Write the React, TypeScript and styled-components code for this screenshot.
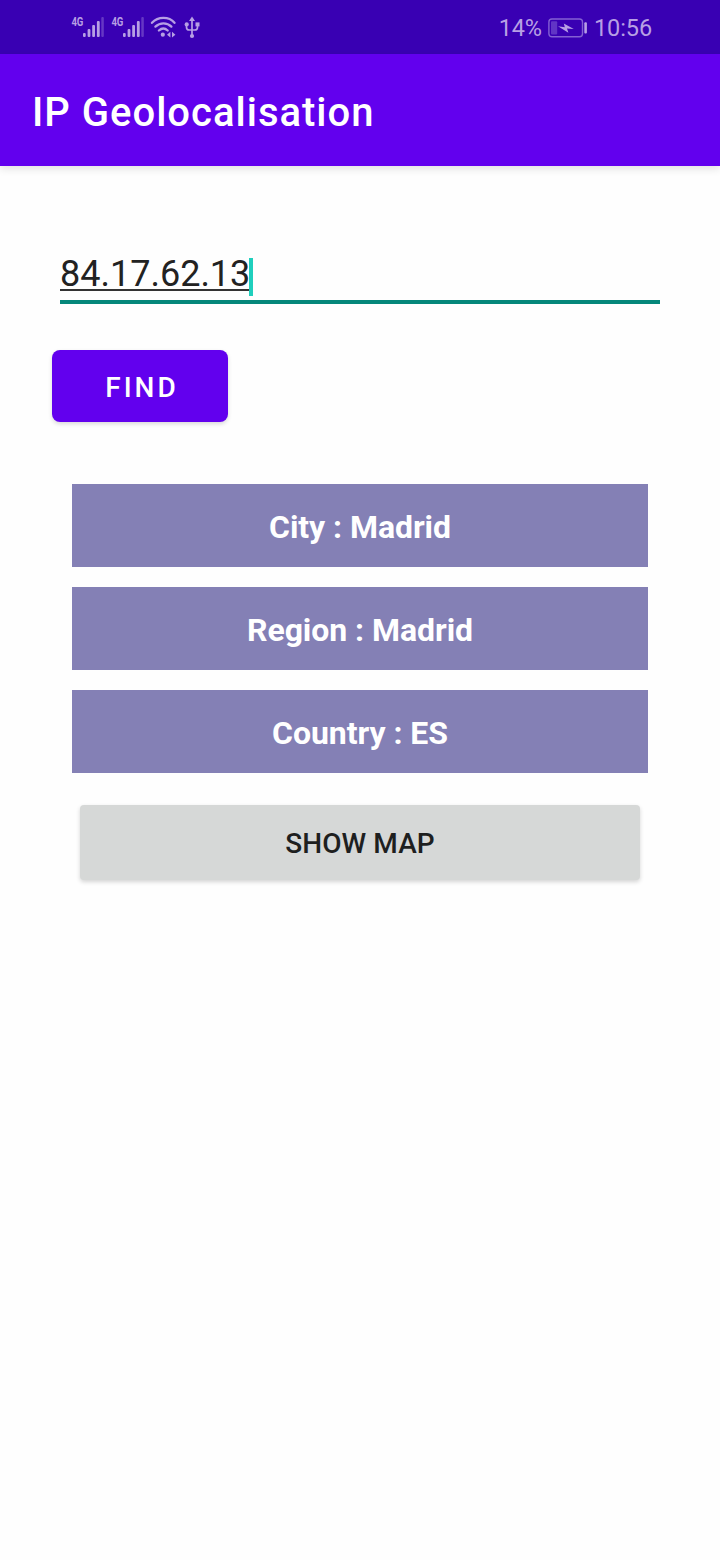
import React from "react";
import styled, { createGlobalStyle } from "styled-components";

const GlobalStyle = createGlobalStyle`
  * { box-sizing: border-box; }
  body {
    margin: 0;
    background: #fff;
    font-family: Roboto, "Liberation Sans", sans-serif;
  }
`;

const Screen = styled.div`
  width: 720px;
  height: 1560px;
  display: flex;
  flex-direction: column;
  background: #fefefe;
`;

const StatusBar = styled.header`
  height: 54px;
  flex: none;
  display: flex;
  justify-content: space-between;
  padding: 0 68px 0 71px;
  background: #3900b3;
  color: #b79fe4;
`;

const StatusGroup = styled.div`
  display: flex;
  align-items: center;
  height: 54px;
`;

const StatusText = styled.span`
  font-size: 23.5px;
  line-height: 28px;
  padding-top: 2px;
  letter-spacing: -0.1px;
  white-space: nowrap;
`;

const SignalIcon = styled.svg`
  width: 33px;
  height: 24px;
  margin-right: 7px;
`;

const WifiIcon = styled.svg`
  width: 26px;
  height: 24px;
  margin-left: -1px;
`;

const UsbIcon = styled.svg`
  width: 16px;
  height: 24px;
  margin-left: 8px;
`;

const BatteryIcon = styled.svg`
  width: 39px;
  height: 20px;
  margin: 1px 7px 0 6px;
`;

const AppBar = styled.div`
  height: 112px;
  flex: none;
  display: flex;
  align-items: center;
  padding: 6px 32px 0;
  background: #6200ee;
  box-shadow: 0 3px 8px rgba(0, 0, 0, 0.11);
`;

const Title = styled.h1`
  margin: 0;
  font-size: 40px;
  line-height: 48px;
  font-weight: 500;
  letter-spacing: 1px;
  color: #fff;
  white-space: nowrap;
`;

const Content = styled.main`
  display: flex;
  flex-direction: column;
  align-items: flex-start;
  padding: 84px 52px 0;
`;

const Field = styled.div`
  width: 600px;
  height: 54px;
  margin-left: 8px;
  display: flex;
  align-items: flex-start;
  border-bottom: 4px solid #05877a;
`;

const FieldValue = styled.span`
  height: 41px;
  background: linear-gradient(#333, #333) 0 100% / 100% 2px no-repeat;
  font-size: 36px;
  line-height: 48px;
  color: #222;
  white-space: nowrap;
`;

const Caret = styled.span`
  width: 4px;
  height: 38px;
  margin: 8px 0 0 -1px;
  background: #1fcfbd;
`;

const FindButton = styled.button`
  width: 176px;
  height: 72px;
  margin: 46px 0 0;
  padding: 3px 0 0 4px;
  border: 0;
  border-radius: 8px;
  background: #6200ee;
  box-shadow: 0 2px 4px rgba(0, 0, 0, 0.15);
  font: 500 28px/34px Roboto, sans-serif;
  letter-spacing: 3px;
  color: #fff;
`;

const Results = styled.section`
  width: 576px;
  margin: 62px 0 0 20px;
  display: flex;
  flex-direction: column;
  gap: 20px;
`;

const ResultRow = styled.div`
  height: 83px;
  display: flex;
  align-items: center;
  justify-content: center;
  padding-top: 2px;
  background: #8480b5;
  font-size: 32px;
  font-weight: 700;
  line-height: 38px;
  letter-spacing: -0.05px;
  color: #fff;
`;

const MapButton = styled.button`
  width: 560px;
  height: 75px;
  margin: 32px 0 0 28px;
  padding: 2px 0 0;
  border: 0;
  border-radius: 4px;
  background: #d6d8d7;
  box-shadow: 0 2px 4px rgba(0, 0, 0, 0.17);
  font: 500 28px/34px Roboto, sans-serif;
  letter-spacing: 0.1px;
  color: #1e1f1f;
`;

const NetworkLabel = styled.text`
  font: 700 12.5px Roboto, sans-serif;
`;

function Signal() {
  return (
    <SignalIcon viewBox="0 0 33 24" fill="currentColor">
      <NetworkLabel x="0.4" y="11" textLength="12" lengthAdjust="spacingAndGlyphs">4G</NetworkLabel>
      <rect x="12" y="18" width="2.7" height="4" rx="1" />
      <rect x="16.6" y="14" width="2.8" height="8" rx="1" />
      <rect x="21.2" y="10" width="2.8" height="12" rx="1" />
      <rect x="25.9" y="6" width="2.8" height="16" rx="1" />
      <rect x="30.3" y="2" width="2.5" height="20" rx="1" opacity="0.35" />
    </SignalIcon>
  );
}

const results: [string, string][] = [
  ["City", "Madrid"],
  ["Region", "Madrid"],
  ["Country", "ES"],
];

export default function App() {
  return (
    <>
      <GlobalStyle />
      <Screen>
        <StatusBar>
          <StatusGroup>
            <Signal />
            <Signal />
            <WifiIcon viewBox="0 0 26 24" fill="none" stroke="currentColor" strokeWidth="2.3" strokeLinecap="round">
              <path d="M2 7.8C8 1.3 19 1.3 24.5 7.8" />
              <path d="M5.4 11.6C10 7.2 17 7.2 21.4 11.6" />
              <path d="M8.9 15.5C11.6 13 15 13 17.7 15.5" />
              <circle cx="12.8" cy="19.7" r="2.1" fill="currentColor" stroke="none" />
              <path d="M20.4 16.8v5.8L17 19.7zM22 16.8v5.8l3.4-2.9z" fill="currentColor" stroke="none" />
            </WifiIcon>
            <UsbIcon viewBox="0 0 16 24" fill="none" stroke="currentColor" strokeWidth="1.7">
              <path d="M8 4v17M2.5 10v2.2q0 2.8 2.8 2.8h5.4q2.8 0 2.8-2.8V10" />
              <path d="M8 1.5l3 4.4h-6z" fill="currentColor" stroke="none" />
              <circle cx="8" cy="21" r="2.1" fill="currentColor" stroke="none" />
              <circle cx="2.7" cy="9.4" r="2.1" fill="currentColor" stroke="none" />
              <rect x="11.5" y="7.4" width="4" height="4" fill="currentColor" stroke="none" />
            </UsbIcon>
          </StatusGroup>
          <StatusGroup>
            <StatusText>14%</StatusText>
            <BatteryIcon viewBox="0 0 39 20" fill="currentColor">
              <rect x="0.9" y="1" width="33.6" height="17.8" rx="3" fill="none" stroke="#8460d3" strokeWidth="1.4" />
              <rect x="3" y="3.3" width="6.2" height="13.2" rx="1" fill="#6135c5" />
              <path d="M10 8.3l6.8 1L15.8 5.4l10 5.6-6.8-.6 1.4 4.4z" />
              <rect x="36.3" y="4.2" width="2.6" height="11.4" rx="1" />
            </BatteryIcon>
            <StatusText>10:56</StatusText>
          </StatusGroup>
        </StatusBar>
        <AppBar>
          <Title>IP Geolocalisation</Title>
        </AppBar>
        <Content>
          <Field>
            <FieldValue>84.17.62.13</FieldValue>
            <Caret />
          </Field>
          <FindButton>FIND</FindButton>
          <Results>
            {results.map(([label, value]) => (
              <ResultRow key={label}>{`${label} : ${value}`}</ResultRow>
            ))}
          </Results>
          <MapButton>SHOW MAP</MapButton>
        </Content>
      </Screen>
    </>
  );
}
